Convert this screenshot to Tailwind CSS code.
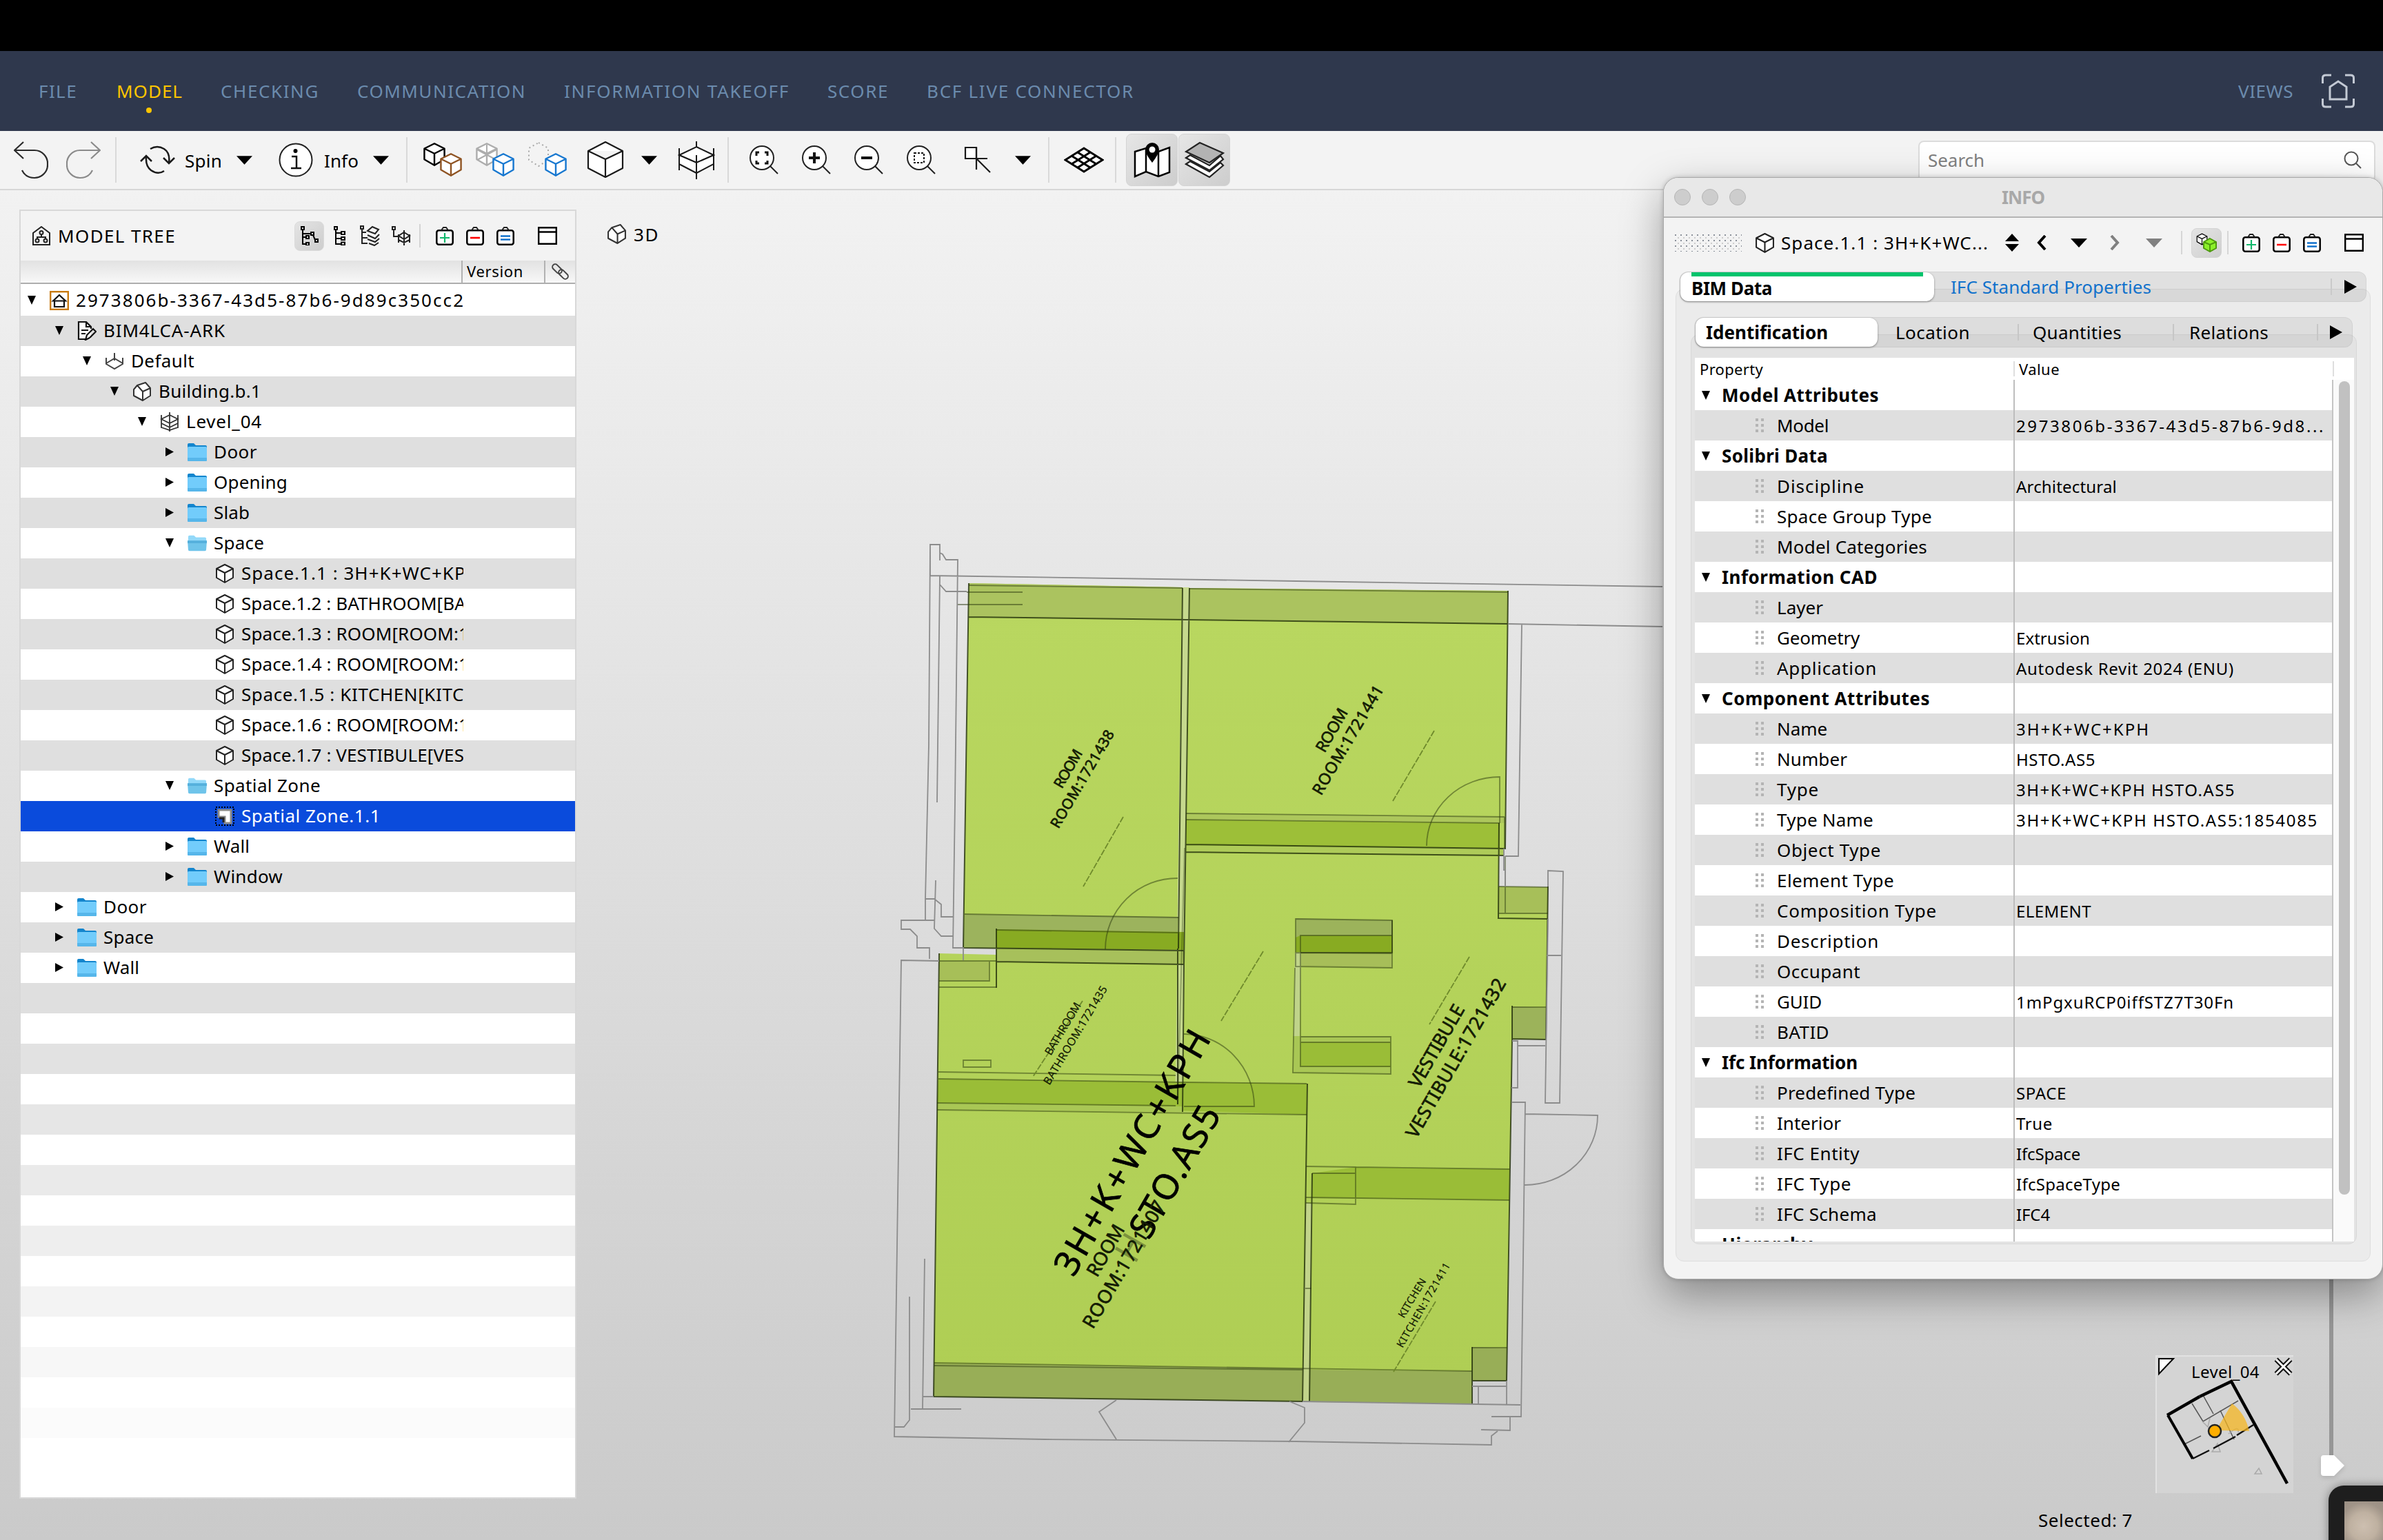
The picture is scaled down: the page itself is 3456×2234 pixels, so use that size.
<!DOCTYPE html>
<html lang="en">
<head>
<meta charset="utf-8">
<title>Model</title>
<script src="https://cdn.jsdelivr.net/npm/@tailwindcss/browser@4"></script>
</head>
<body class="relative flex h-[2234px] w-[3456px] flex-col overflow-hidden bg-black pt-[74px] font-['Noto_Sans','Open_Sans',sans-serif] text-[26px] leading-none text-black">

<!-- shared icons -->
<svg class="hidden">
  <defs>
    <symbol id="cube" viewBox="0 0 28 28"><path d="M14 1 26 7V20L14 27 2 20V7Z" fill="#fff"/><path d="M14 1 26 7V20L14 27 2 20V7ZM2 7 14 13 26 7M14 13V27" fill="none" stroke="currentColor" stroke-width="2" stroke-linejoin="round"/></symbol>
    <symbol id="building" viewBox="0 0 28 28"><path d="M2 11 7 5 19 1 26 9V20L15 27 2 20Z" fill="#fff"/><path d="M2 11 7 5 19 1 26 9V20L15 27 2 20ZM7 5 15 14 26 9M15 14V27" fill="none" stroke="#333" stroke-width="2" stroke-linejoin="round"/></symbol>
    <symbol id="level" viewBox="0 0 28 28"><path d="M2 4V23M26 4V23M14 0V28M14 4 26 10 14 16 2 10ZM2 16 14 22 26 16M2 22 14 26 26 22" fill="none" stroke="#333" stroke-width="1.8"/></symbol>
    <symbol id="site" viewBox="0 0 28 28"><path d="M2 9V18L14 25 26 18V9M2 17 14 10 26 17M14 2V13" fill="none" stroke="#444" stroke-width="2"/></symbol>
    <symbol id="doc" viewBox="0 0 28 28"><path d="M2 1H13L20 8V26H2Z" fill="#fff"/><path d="M20 11V8L13 1H2V26H13M13 1V8H20M6 13H16M6 18H12M12 27 14 20 23 11 27 15 18 24Z" fill="none" stroke="#111" stroke-width="2.2"/></symbol>
    <symbol id="project" viewBox="0 0 28 28"><rect x="1.2" y="1.2" width="25.6" height="25.6" fill="#fff" stroke="#c87a10" stroke-width="2.4"/><path d="M5 14.500 14 6 23 14.500H5ZM7 15V23H21V15" fill="none" stroke="#111" stroke-width="2.2"/></symbol>
    <symbol id="folder" viewBox="0 0 28 28"><path d="M0 3Q0 1 2 1H9L12 4H26Q28 4 28 6V14H0Z" fill="#1385cd"/><rect y="6" width="28" height="21" rx="1.500" fill="#72ccfb"/><path d="M0 22H28V25.500Q28 27 26.500 27H1.500Q0 27 0 25.500Z" fill="#56b6ea"/></symbol>
    <symbol id="folder-open" viewBox="0 0 30 28"><path d="M1 4Q1 2 3 2H10L13 5H27Q29 5 29 7V12H1Z" fill="#93d9f9"/><path d="M0 10H30L29 24Q29 26 27 26H3Q1 26 1 24Z" fill="#6fc4ea"/><path d="M0 10H30V14H0Z" fill="#55b0dc"/></symbol>
    <symbol id="zone" viewBox="0 0 28 28"><rect x="1" y="1" width="26" height="26" fill="none" stroke="#000" stroke-width="2" stroke-dasharray="2 2"/><path d="M5 5H23V24H14V15H5Z" fill="#fff" stroke="#8a8a8a" stroke-width="3"/><path d="M6 17H12V23" fill="none" stroke="#222" stroke-width="3"/></symbol>
    <symbol id="tri" viewBox="0 0 24 13"><path d="M0 0H24L12 13Z" fill="currentColor"/></symbol>
    <symbol id="basket" viewBox="0 0 26 28"><rect x="1.300" y="6.300" width="23.400" height="20.400" rx="3" fill="#fff" stroke="#000" stroke-width="2.500"/><path d="M8 6 11 2H15L18 6" fill="none" stroke="#222" stroke-width="2"/></symbol>
    <symbol id="pane" viewBox="0 0 28 26"><path d="M1.200 1.200H26.800V24.800H1.200ZM1.200 7.500H26.800" fill="#fff" stroke="#000" stroke-width="2.400"/></symbol>
    <symbol id="grip" viewBox="0 0 12 20"><path d="M0 2H4M8 2H12M0 10H4M8 10H12M0 18H4M8 18H12" stroke="#b4b4b4" stroke-width="4"/></symbol>
    <symbol id="lens" viewBox="0 0 44 44"><circle cx="19" cy="19" r="17" fill="#fff" stroke="#222" stroke-width="2"/><path d="M31 31 42 42" stroke="#222" stroke-width="2"/></symbol>
  </defs>
</svg>

<!-- main menu -->
<nav class="flex h-[116px] shrink-0 items-center bg-[#2f384d] text-[#6b8bad]">
  <span class="ml-[56px] w-[113px] whitespace-nowrap" data-w="56">FILE</span>
  <span class="relative w-[151px] whitespace-nowrap text-[#fdc500]" data-w="96">MODEL<i class="absolute top-[37px] left-[43px] size-2 rounded-full bg-[#fdc500]"></i></span>
  <span class="w-[198px] whitespace-nowrap" data-w="143">CHECKING</span>
  <span class="w-[300px] whitespace-nowrap" data-w="245">COMMUNICATION</span>
  <span class="w-[382px] whitespace-nowrap" data-w="327">INFORMATION TAKEOFF</span>
  <span class="w-[144px] whitespace-nowrap" data-w="89">SCORE</span>
  <span class="w-[302px] whitespace-nowrap" data-w="301">BCF LIVE CONNECTOR</span>
  <span class="ml-auto whitespace-nowrap" data-w="80">VIEWS</span>
  <svg class="mr-[41px] ml-[41px] h-[50px] w-[48px]" viewBox="0 0 48 50" fill="none" stroke="#c3c9d4" stroke-width="3"><path d="M1.500 14V6Q1.500 2 6 2H14M34 2H42Q46.500 2 46.500 6V14M46.500 36V44Q46.500 48 42 48H34M14 48H6Q1.500 48 1.500 44V36"/><path d="M12 37V19L24 11 36 19V37Z"/></svg>
</nav>

<!-- toolbar -->
<div class="flex h-[86px] shrink-0 items-center border-b-2 border-[#d7d7d7] bg-[#f3f3f3]">
  <svg class="ml-[20px] h-[56px] w-[50px]" viewBox="0 0 50 56" fill="none" stroke="#2a2a2a" stroke-width="2.200"><path d="M14 2 1 14 14 26M1 14H30A19 19 0 0 1 49 34A19 19 0 0 1 30 54Q17 54 12 43"/></svg>
  <svg class="ml-[26px] h-[56px] w-[50px]" viewBox="0 0 50 56" fill="none" stroke="#8a8a8a" stroke-width="2.200"><path d="M36 2 49 14 36 26M49 14H20A19 19 0 0 0 1 34A19 19 0 0 0 20 54Q33 54 38 43"/></svg>
  <i class="ml-[21px] h-[66px] w-[2px] bg-[#d9d9d9]"></i>
  <svg class="ml-[34px] h-[42px] w-[51px]" viewBox="0 0 51 42" fill="none" stroke="#1a1a1a" stroke-width="2.500"><path d="M15 5Q25 -1 35 5 44 11 42 25M34 18 42 26 50 18M35 37Q26 43 16 36 8 30 9 17M1 23 9 15 17 23"/></svg>
  <span class="ml-[14px] w-[54px] whitespace-nowrap pt-px" data-w="54">Spin</span>
  <svg class="ml-[21px] h-[13px] w-[23px]"><use href="#tri"/></svg>
  <svg class="ml-[38px] h-[50px] w-[50px]" viewBox="0 0 50 50"><circle cx="25" cy="25" r="23.500" fill="#fff" stroke="#222" stroke-width="2"/><circle cx="24.500" cy="12" r="3"/><path d="M19 20H26V37M18 37H33" fill="none" stroke="#111" stroke-width="2.500"/></svg>
  <span class="ml-[16px] w-[50px] whitespace-nowrap pt-px" data-w="50">Info</span>
  <svg class="ml-[21px] h-[13px] w-[23px]"><use href="#tri"/></svg>
  <i class="ml-[25px] h-[66px] w-[2px] bg-[#d9d9d9]"></i>
  <svg class="ml-[22px] h-[54px] w-[58px]" viewBox="0 0 58 54"><use href="#cube" width="34" height="38" x="0" y="0"/><use href="#cube" width="34" height="38" x="24" y="15" class="text-[#8f5423]"/></svg>
  <svg class="ml-[18px] h-[54px] w-[58px]" viewBox="0 0 58 54"><g class="text-[#adadad]"><use href="#cube" width="34" height="38" x="0" y="0"/><path d="M17 5V33M3 12 31 27M31 12 3 27" stroke="currentColor" stroke-width="2"/></g><use href="#cube" width="34" height="38" x="24" y="15" class="text-[#1878d0]"/></svg>
  <svg class="ml-[18px] h-[54px] w-[58px]" viewBox="0 0 58 54"><path d="M16 2 30 10V27L16 36 2 27V10Z" fill="none" stroke="#a8a8a8" stroke-width="2" stroke-dasharray="2 4"/><use href="#cube" width="34" height="38" x="24" y="15" class="text-[#1878d0]"/></svg>
  <svg class="ml-[28px] h-[54px] w-[56px]" viewBox="0 0 56 54" fill="#fff" stroke="#1a1a1a" stroke-width="2.200" stroke-linejoin="round"><path d="M27 1 52 14V39L27 52 2 39V14ZM2 14 27 26 52 14M27 26V52"/></svg>
  <svg class="ml-[23px] h-[13px] w-[23px]"><use href="#tri"/></svg>
  <svg class="ml-[30px] h-[56px] w-[54px]" viewBox="0 0 54 56" fill="none" stroke="#1a1a1a" stroke-width="2"><path d="M27 9 52 21 27 32 2 21Z" fill="#fff"/><path d="M2 34 27 47 52 34V21L27 32 2 21Z" fill="#fff"/><path d="M27 1V10M2 11V43M52 11V43M27 21V56"/></svg>
  <i class="ml-[18px] h-[66px] w-[2px] bg-[#d9d9d9]"></i>
  <svg class="ml-[29px] h-[44px] w-[44px]" viewBox="0 0 44 44"><use href="#lens"/><path d="M11 16V11H15M23 11H27V16M27 23V27H23M15 27H11V23" fill="none" stroke="#111" stroke-width="3"/></svg>
  <svg class="ml-[32px] h-[44px] w-[44px]" viewBox="0 0 44 44"><use href="#lens"/><path d="M11 19H27M19 11V27" stroke="#111" stroke-width="4"/></svg>
  <svg class="ml-[32px] h-[44px] w-[44px]" viewBox="0 0 44 44"><use href="#lens"/><path d="M11 19H27" stroke="#111" stroke-width="4"/></svg>
  <svg class="ml-[32px] h-[44px] w-[44px]" viewBox="0 0 44 44"><use href="#lens"/><rect x="12" y="12" width="14" height="14" fill="none" stroke="#111" stroke-width="2" stroke-dasharray="3 2"/></svg>
  <svg class="ml-[40px] h-[40px] w-[40px]" viewBox="0 0 40 40" fill="none" stroke="#1a1a1a" stroke-width="2.200"><path d="M2 2H18V18H2Z" fill="#fff"/><path d="M18 2V34M2 18H34M18 18 38 38"/></svg>
  <svg class="ml-[34px] h-[13px] w-[23px]"><use href="#tri"/></svg>
  <i class="ml-[25px] h-[66px] w-[2px] bg-[#d9d9d9]"></i>
  <svg class="ml-[21px] h-[38px] w-[58px]" viewBox="0 0 58 38" fill="#fff" stroke="#000" stroke-width="3"><path d="M29 2 56 19 29 36 2 19Z"/><path d="M20 8 47 25M11 13 38 30M38 8 11 25M47 13 20 30"/></svg>
  <i class="ml-[16px] h-[66px] w-[2px] bg-[#d9d9d9]"></i>
  <span class="ml-[14px] flex h-[76px] w-[75px] items-center justify-center rounded-lg border border-[#d4d4d4] bg-linear-to-br from-[#e6e6e6] to-[#cdcdcd]">
    <svg class="h-[52px] w-[54px]" viewBox="0 0 54 52"><path d="M2 14 18 9 36 14 52 8V44L36 50 18 43 2 50Z" fill="#fff" stroke="#000" stroke-width="2.500"/><path d="M18 9V43M36 14V50" stroke="#000" stroke-width="2.500"/><path d="M27 1A10 10 0 0 1 37 11Q37 17 27 30 17 17 17 11A10 10 0 0 1 27 1Z"/><circle cx="27" cy="11" r="4.500" fill="#fff"/></svg>
  </span>
  <span class="ml-px flex h-[76px] w-[75px] items-center justify-center rounded-lg border border-[#d4d4d4] bg-linear-to-br from-[#e6e6e6] to-[#cdcdcd]">
    <svg class="h-[54px] w-[58px]" viewBox="0 0 58 54" stroke="#222" stroke-width="2.200" fill="#fff"><path d="M2 33 8 29 36 44 52 31 56 35 36 52Z"/><path d="M2 24 8 20 36 35 52 21 56 26 36 42Z"/><path d="M22 2 56 17 36 31 2 15Z" fill="#b3b3b3"/></svg>
  </span>
  <div class="mt-[3px] mr-[11px] ml-auto flex h-[60px] w-[663px] items-center rounded-lg border-2 border-[#dcdcdc] bg-white pr-[18px] pb-[4px] pl-[12px] text-[#808080]">
    <span class="whitespace-nowrap" data-w="82">Search</span>
    <svg class="ml-auto size-[26px]" viewBox="0 0 26 26" fill="none" stroke="#555" stroke-width="2"><circle cx="11" cy="11" r="9.500"/><path d="M18 18 25 25"/></svg>
  </div>
</div>

<!-- workspace -->
<main class="relative flex grow items-start bg-linear-to-b from-[#f2f2f2] to-[#cacaca] pt-[28px]">

  <!-- model tree -->
  <section class="ml-[28px] flex h-[1870px] w-[808px] flex-col border-2 border-[#d8d8d8] bg-white">
    <div class="flex h-[72px] shrink-0 items-center bg-[#f3f3f3] pl-[16px]">
      <svg class="h-[28px] w-[28px]" viewBox="0 0 28 28" fill="none" stroke="#222" stroke-width="2"><path d="M2 27V10L14 1 26 10V27Z"/><circle cx="14" cy="9.500" r="2.500"/><circle cx="8" cy="21" r="2.500"/><circle cx="20" cy="21" r="2.500"/><path d="M14 12V16M8 18V16H20V18"/></svg>
      <span class="ml-[10px] w-[172px] whitespace-nowrap" data-w="171">MODEL TREE</span>
      <span class="ml-[171px] flex h-[43px] w-[43px] items-center justify-center rounded-lg border border-[#dadada] bg-linear-to-br from-[#e4e4e4] to-[#cdcdcd]">
        <svg class="size-[28px]" viewBox="0 0 28 28" fill="none" stroke="#000" stroke-width="2"><path d="M2 1H6V5H2ZM4 5V26H9M4 11H16M9 16H4M16 9H20V13H16ZM9 14H13V18H9ZM9 24H13V28H9ZM19 13 22 20M22 19H26V23H22Z"/></svg>
      </span>
      <svg class="ml-[13px] h-[28px] w-[20px]" viewBox="0 0 20 28" fill="none" stroke="#000" stroke-width="2"><path d="M2 1H6V5H2ZM4 5V26H12M4 10H12M4 18H12M12 8H17V12H12ZM12 16H17V20H12ZM12 23.500H17V27.500H12Z"/></svg>
      <svg class="ml-[18px] h-[30px] w-[32px]" viewBox="0 0 32 30" fill="none" stroke="#222" stroke-width="2"><path d="M2 1H6V5H2ZM4 5V26H12M4 10H10M4 18H12"/><path d="M19 2 28 6 23 12 12 8ZM12 14 23 19 29 13M12 20 23 24 29 19M14 26 22 29 28 25"/></svg>
      <svg class="ml-[15px] h-[28px] w-[28px]" viewBox="0 0 28 28" fill="none" stroke="#222" stroke-width="2"><path d="M1 1H5V5H1ZM3 5V15H10M18 6V28M10 12V24M26 12V24M18 9 26 14 18 19 10 14ZM10 20 18 24 26 20"/></svg>
      <i class="ml-[12px] h-[34px] w-[2px] bg-[#d4d4d4]"></i>
      <svg class="ml-[22px] h-[28px] w-[26px]" viewBox="0 0 26 28"><use href="#basket"/><path d="M6 17H20M13 10V24" stroke="#12b86c" stroke-width="2.200"/></svg>
      <svg class="ml-[18px] h-[28px] w-[26px]" viewBox="0 0 26 28"><use href="#basket"/><path d="M6 17H20" stroke="#f00" stroke-width="2.600"/></svg>
      <svg class="ml-[18px] h-[28px] w-[26px]" viewBox="0 0 26 28"><use href="#basket"/><path d="M6 14.500H20M6 19.500H20" stroke="#1272cc" stroke-width="2.400"/></svg>
      <svg class="ml-[34px] h-[26px] w-[28px]"><use href="#pane"/></svg>
    </div>
    <div class="flex h-[34px] shrink-0 border-b-2 border-[#aeaeae] bg-linear-to-b from-[#e2e2e2] to-[#f8f8f8] text-[22px] leading-[30px]">
      <span class="w-[641px] border-r-2 border-[#b2b2b2]"></span>
      <span class="w-[120px] border-r-2 border-[#b2b2b2] pl-[6px] whitespace-nowrap"><b class="font-normal" data-size="22" data-w="82">Version</b></span>
      <svg class="mt-[3px] ml-[9px] h-[26px] w-[28px]" viewBox="0 0 28 26" fill="none" stroke="#444" stroke-width="2"><rect x="0" y="5" width="16" height="8" rx="4" transform="rotate(45 8 9)"/><rect x="9" y="13" width="16" height="8" rx="4" transform="rotate(45 17 17)"/></svg>
    </div>
    <div id="tree" class="flex min-h-0 grow flex-col overflow-hidden pt-[2px]"></div>
  </section>

  <!-- 3D view title -->
  <div class="ml-[44px] flex items-center pt-[21px]">
    <svg class="size-[29px]"><use href="#building"/></svg>
    <span class="ml-[10px] whitespace-nowrap" data-w="37">3D</span>
  </div>

  <!-- floor plan -->
  <svg class="absolute inset-0 h-[1958px] w-[3456px]" viewBox="0 276 3456 1958" fill="none">
    <defs>
      <linearGradient id="floor" gradientUnits="userSpaceOnUse" x1="0" y1="850" x2="0" y2="2035"><stop offset="0" stop-color="#b9d760"/><stop offset="1" stop-color="#afce54"/></linearGradient>
    </defs>
    <g fill="url(#floor)">
      <path d="M1405 846 1715 852 1707 1378 1397 1375Z"/>
      <path d="M1725 853 2187 857 2183 1231 2174 1231 2173 1286 2245 1287 2242 1508 2193 1508 2185 2003 2135 2003V2036L1354 2026 1362 1383 1445 1385V1375L1717 1379Z"/>
    </g>
    <g>
      <path d="M1405 846 1715 852V898L1405 895ZM1725 853 2187 857V905L1725 898Z" fill="#abc35f"/>
      <path d="M1715 852H1725L1715 1613H1704Z" fill="#c6d98e"/>
      <path d="M1399 1326 1709 1330 1707 1378 1397 1375Z" fill="#9cb35d"/>
      <path d="M1445 1348 1717 1352 1717 1378 1445 1375Z" fill="#88ab22"/>
      <path d="M1445 1375 1717 1379V1399L1445 1395Z" fill="#a7c05b"/>
      <path d="M1362 1394 1435 1395V1423H1362Z" fill="#a7bf58"/>
      <path d="M1720 1179 2182 1185V1194L1720 1189Z" fill="#adc75c"/>
      <path d="M1720 1189 2175 1194V1231L1720 1226Z" fill="#9dbf38"/>
      <path d="M1719 1226 2181 1231V1241L1719 1236Z" fill="#aecb59"/>
      <path d="M2174 1286 2245 1287V1325H2174Z" fill="#a7bf59"/>
      <path d="M2193 1460 2243 1462 2242 1508H2193Z" fill="#9cb35a"/>
      <path d="M1879 1332 2019 1335V1357H1886L1879 1382Z" fill="#9cb35b"/>
      <path d="M1886 1357H2019V1382L1879 1381V1360Z" fill="#88ab22"/>
      <path d="M1879 1381 2019 1383V1404L1879 1402Z" fill="#a7be59"/>
      <path d="M1878 1382H1887L1884 1548H1875Z" fill="#c0d48a"/>
      <path d="M1875 1503H2017V1558L1875 1556Z" fill="#a9c755"/>
      <path d="M1886 1512H2017V1548L1885 1547Z" fill="#9abd37"/>
      <path d="M1361 1565 1895 1572V1617L1359 1600Z" fill="#9abd37"/>
      <path d="M1359 1600 1715 1605V1613L1359 1610Z" fill="#a9c755"/>
      <path d="M1903 1702 1966 1693 2189 1696V1741L1903 1738Z" fill="#9abd37"/>
      <path d="M1894 1745 1903 1746 1899 2033H1889Z" fill="#c2d48a"/>
      <path d="M1355 1978 1889 1985V2033L1354 2026ZM1899 1987 2135 1989V2036L1899 2034ZM2135 1954 2186 1956 2185 2003H2135Z" fill="#98ae57"/>
    </g>
    <!-- room outlines -->
    <g stroke="#1e2a08" stroke-opacity=".78" stroke-width="2">
      <path d="M1405 846 1397 1375M1405 895 2187 905M1715 853 1709 1376M1725 853 1717 1399M2187 857 2183 1231 1719 1225M1719 1236 2181 1241M2174 1194 2173 1332 2245 1333M2245 1286 2242 1508 2193 1507V1459M2193 1507 2185 2003H2135M2135 1954V2036M1397 1375 1717 1379V1399L1445 1395M1445 1347V1433M1362 1383 1354 2026 1889 2033M1896 1572 1889 2033M1903 1702 1899 2033M1708 1376V1602M1717 1399 1715 1613"/>
      <path d="M1886 1382H2019V1335" stroke-opacity=".6"/>
      <path d="M1718 1230 1708 1602" stroke-opacity=".3"/>
    </g>
    <g stroke="#2a380e" stroke-opacity=".5" stroke-width="1.800">
      <path d="M1405 849 1715 853M1725 854 2187 859M1720 1180 2182 1185M1720 1189 2175 1194M2182 1185V1230M1399 1326 1709 1331M1445 1349 1708 1353M1362 1394H1445M1362 1423H1435V1395M1362 1432H1445"/>
      <path d="M2174 1286 2245 1287M2174 1325H2245M2183 1242V1324M2193 1461H2243"/>
      <path d="M1879 1333 2019 1335V1404L1879 1402ZM1886 1547V1357H2019M1879 1382 2019 1383M1878 1404 1875 1556 2017 1558V1504H1886M1886 1512H2017M1885 1547H2017" />
      <path d="M1361 1555 1705 1560M1361 1565 1717 1570 1895 1572M1359 1600 1705 1604M1359 1610 1895 1617M1397 1538H1437V1548H1397Z"/>
      <path d="M1894 1692 1966 1693V1747L1894 1745M1903 1702H1966M1966 1693 2189 1696M1894 1737 2189 1741M1893 1869H1902"/>
      <path d="M1355 1977 2135 1989M1355 1981 1889 1987M2135 1955H2186"/>
      <path d="M1603 1377A104 103 0 0 1 1708 1274M2069 1227A106 100 0 0 1 2175 1127V1194M1717 1500A102 105 0 0 1 1819 1605H1717"/>
      <path d="M1483 859H1402M1483 877H1389"/>
    </g>
    <!-- leader lines -->
    <path d="M1629 1185 1571 1286M2080 1060 2020 1162M1832 1380 1771 1481M2131 1388 2073 1486M2082 1888 2021 1990M1570 1452 1498 1562" stroke="#6f8a2c" stroke-width="1.800" stroke-dasharray="9 2"/>
    <!-- walls -->
    <g stroke="#8c8c8c" stroke-width="1.800">
      <path d="M1349 835V790H1363V813M1363 802 1367 804 1372 812H1389L1385 1164 1382 1375H1397V1393M1349 790 1347 1080 1342 1304V1335M1349 835 1880 843 2411 851M1363 836 1359 1164M1363 848 1372 858H1402M1342 1304H1355L1365 1312V1330H1382M1357 1277 1355 1347 1365 1358H1382M1355 1335H1307V1348H1320L1330 1358V1375H1348V1391"/>
      <path d="M1362 1394 1307 1393 1297 2084 1515 2088 1879 2091 2163 2096V2083L2172 2076M1297 2070H1311L1319 2060V1881M1341 1826 1338 2043M1321 2044H1394M1338 2026H1354"/>
      <path d="M2187 905 2411 909M2207 905 2202 1242H2183M2181 1231V1262H2183V1286M2245 1286V1263L2267 1264 2262 1600H2241L2245 1333M2243 1386H2264M2201 1517H2241M2193 1510H2201V1578H2192M2192 1599H2212L2206 2055H2163M2212 1616 2317 1618A105 101 0 0 1 2211 1719M2185 2003V2038M2135 2011H2185M2144 2011V2036M1889 2033 2205 2038M2190 2055V2075L2148 2074"/>
      <path d="M1619 2031 1594 2048 1619 2088M1870 2033 1892 2042V2064L1869 2092"/>
    </g>
    <!-- room labels -->
    <g fill="#141c04" stroke="#141c04" stroke-width=".7" font-family="'Noto Sans', sans-serif">
      <g font-size="21"><text transform="translate(1540 1145) rotate(-60)" textLength="61">ROOM</text><text transform="translate(1535 1203) rotate(-59.500)" textLength="161">ROOM:1721438</text></g>
      <g font-size="23"><text transform="translate(1921 1093) rotate(-60)" textLength="69">ROOM</text><text transform="translate(1916 1155) rotate(-59.500)" textLength="180">ROOM:1721441</text></g>
      <g font-size="16" stroke-width=".2"><text transform="translate(1524 1532) rotate(-59)" textLength="86">BATHROOM</text><text transform="translate(1522 1575) rotate(-59)" textLength="164">BATHROOM:1721435</text></g>
      <g font-size="27"><text transform="translate(2058 1580) rotate(-60)" textLength="134">VESTIBULE</text><text transform="translate(2054 1653) rotate(-60)" textLength="262">VESTIBULE:1721432</text></g>
      <g font-size="15" stroke-width=".2"><text transform="translate(2036 1913) rotate(-59)" textLength="64">KITCHEN</text><text transform="translate(2034 1956) rotate(-60)" textLength="139">KITCHEN:1721411</text></g>
      <g font-size="51" fill="#000" stroke="#000"><text transform="translate(1557 1854) rotate(-60)" textLength="401">3H+K+WC+KPH</text><text transform="translate(1646 1835) rotate(-60)" textLength="252"><tspan fill-opacity=".3" stroke-opacity="0">H</tspan>STO.AS5</text></g>
      <g font-size="27"><text transform="translate(1591 1854) rotate(-60)" textLength="82">ROOM</text><text transform="translate(1585 1929) rotate(-59.500)" textLength="209">ROOM:1721407</text></g>
    </g>
  </svg>

  <!-- section slider -->
  <div class="absolute top-[1500px] left-[3378px] h-[336px] w-[6px] bg-[#969696]"></div>
  <svg class="absolute top-[1834px] left-[3365px] h-[34px] w-[37px] drop-shadow-md" viewBox="0 0 37 34"><path d="M1 5Q1 1 5 1H20L35 16 20 31H5Q1 31 1 27Z" fill="#fff"/></svg>

  <!-- mini map -->
  <div class="absolute top-[1690px] left-[3126px] h-[200px] w-[200px] border-t-2 border-l-2 border-[#e2e2e2] bg-[#d4d4d4]">
    <svg class="absolute -top-[2px] -left-[2px] size-[200px]" viewBox="3126 1966 200 200" fill="none">
      <path d="M3131 1971H3152L3131 1993Z" fill="#fff" stroke="#000" stroke-width="2"/>
      <path d="M3301 1972 3322 1993M3322 1972 3301 1993" stroke="#111" stroke-width="7"/><path d="M3301 1972 3322 1993M3322 1972 3301 1993" stroke="#fff" stroke-width="3"/>
      <path d="M3179 2036 3195 2062 3246 2032M3195 2024 3210 2051M3220 2046 3240 2088M3168 2095 3192 2083" stroke="#555" stroke-width="1.500"/>
      <path d="M3194 2062 3202 2070 3205 2057M3232 2080Q3248 2066 3246 2078M3208 2106H3220L3216 2094ZM3270 2138 3276 2130 3280 2138Z" stroke="#aaa" stroke-width="1.500"/>
      <path d="M3180 2116 3204 2104M3210 2101 3242 2084M3244 2082 3268 2067" stroke="#111" stroke-width="2.500"/>
      <path d="M3144 2053 3180 2116" stroke="#000" stroke-width="4"/>
      <path d="M3143 2053 3190 2026" stroke="#000" stroke-width="4.500"/><path d="M3190 2026 3236 2004 3317 2152" stroke="#000" stroke-width="4.500"/>
      <path d="M3218 2068 3237 2036Q3256 2050 3262 2076L3218 2075Z" fill="#f7b51c" fill-opacity=".72"/>
      <circle cx="3212" cy="2076" r="9" fill="#ffae00" stroke="#222" stroke-width="2.500"/>
    </svg>
    <span class="absolute top-[10px] left-[50px] whitespace-nowrap text-[24px]" data-size="24" data-w="99">Level_04</span>
  </div>

  <span class="absolute top-[1916px] left-[2956px] whitespace-nowrap" data-w="137">Selected: 7</span>

  <!-- floating video call thumbnail -->
  <div class="absolute top-[1879px] left-[3377px] h-[100px] w-[120px] rounded-tl-[22px] bg-[#1e1e1e] pt-[23px] pl-[23px] shadow-[0_0_14px_rgba(0,0,0,0.4)]">
    <div class="h-full w-full bg-[radial-gradient(circle_at_28px_36px,#cdbfb0_0,#bfb1a1_20px,#a09488_34px,#8f857b_70px)]"></div>
  </div>
</main>

<!-- info window -->
<section class="absolute top-[257px] left-[2412px] flex h-[1599px] w-[1044px] flex-col overflow-hidden rounded-[22px] border border-[#a9a9a9] bg-[#f3f3f3] shadow-[0_22px_60px_rgba(0,0,0,0.35),0_0_6px_rgba(0,0,0,0.2)]">
  <header class="relative flex h-[58px] shrink-0 items-center justify-center border-b-2 border-[#b4b4b4] bg-[#e8e8e8]">
    <div class="absolute left-[15px] flex gap-[16px]">
      <i class="size-[24px] rounded-full border border-[#b5b5b5] bg-[#cdcdcd]"></i><i class="size-[24px] rounded-full border border-[#b5b5b5] bg-[#cdcdcd]"></i><i class="size-[24px] rounded-full border border-[#b5b5b5] bg-[#cdcdcd]"></i>
    </div>
    <b class="whitespace-nowrap text-[#a8a8a8]" data-w="62">INFO</b>
  </header>

  <div class="flex h-[72px] shrink-0 items-center pl-[15px]">
    <svg class="h-[26px] w-[98px]" viewBox="0 0 98 26"><defs><pattern id="dots" width="8" height="8" patternUnits="userSpaceOnUse"><rect x="1" y="1" width="2" height="2" fill="#8a9099"/><rect x="5" y="5" width="2" height="2" fill="#ccc"/></pattern></defs><rect width="98" height="26" fill="url(#dots)"/></svg>
    <svg class="ml-[19px] size-[29px] text-[#222]"><use href="#cube"/></svg>
    <span class="ml-[9px] w-[302px] whitespace-nowrap" data-w="301">Space.1.1 : 3H+K+WC...</span>
    <svg class="ml-[23px] h-[26px] w-[20px]" viewBox="0 0 20 26"><path d="M0 11H20L10 0ZM0 15H20L10 26Z"/></svg>
    <svg class="ml-[26px] h-[22px] w-[14px]" viewBox="0 0 14 22" fill="none" stroke="#000" stroke-width="4"><path d="M12 1 3 11 12 21"/></svg>
    <svg class="ml-[35px] h-[13px] w-[24px]"><use href="#tri"/></svg>
    <svg class="ml-[33px] h-[22px] w-[14px]" viewBox="0 0 14 22" fill="none" stroke="#808080" stroke-width="4"><path d="M2 1 11 11 2 21"/></svg>
    <svg class="ml-[38px] h-[13px] w-[24px] text-[#808080]"><use href="#tri"/></svg>
    <i class="ml-[27px] h-[34px] w-[2px] bg-[#d6d6d6]"></i>
    <span class="ml-[13px] flex h-[43px] w-[44px] items-center justify-center rounded-lg border border-[#d4d4d4] bg-linear-to-br from-[#e4e4e4] to-[#cfcfcf]">
      <svg class="h-[28px] w-[30px]" viewBox="0 0 30 28"><use href="#cube" width="17" height="18"/><path d="M20 8 29 13V22L20 27 11 22V13Z" fill="#8cf02a" stroke="#4e9a10" stroke-width="2"/><path d="M11 13 20 17 29 13M20 17V27" fill="none" stroke="#4e9a10" stroke-width="2"/></svg>
    </span>
    <i class="ml-[8px] h-[34px] w-[2px] bg-[#d6d6d6]"></i>
    <svg class="ml-[20px] h-[28px] w-[26px]" viewBox="0 0 26 28"><use href="#basket"/><path d="M6 17H20M13 10V24" stroke="#12b86c" stroke-width="2.200"/></svg>
    <svg class="ml-[18px] h-[28px] w-[26px]" viewBox="0 0 26 28"><use href="#basket"/><path d="M6 17H20" stroke="#f00" stroke-width="2.600"/></svg>
    <svg class="ml-[18px] h-[28px] w-[26px]" viewBox="0 0 26 28"><use href="#basket"/><path d="M6 14.500H20M6 19.500H20" stroke="#1272cc" stroke-width="2.400"/></svg>
    <svg class="ml-[34px] h-[26px] w-[28px]"><use href="#pane"/></svg>
  </div>

  <!-- outer tabs -->
  <div class="relative z-10 mt-[6px] ml-[23px] flex h-[44px] w-[996px] shrink-0 items-center rounded-xl border border-black/5 bg-black/8">
    <div class="flex h-[42px] w-[368px] flex-col rounded-xl bg-white px-[16px] shadow-[0_1px_3px_rgba(0,0,0,0.4)]">
      <i class="h-[6px] w-full bg-[#00c46c]"></i>
      <b class="pt-[4px] whitespace-nowrap" data-w="117">BIM Data</b>
    </div>
    <span class="ml-[24px] w-[292px] whitespace-nowrap text-[#1272cc]" data-w="291">IFC Standard Properties</span>
    <i class="ml-auto h-[24px] w-[2px] bg-[#cacaca]"></i>
    <svg class="mr-[13px] ml-[18px] h-[20px] w-[18px]" viewBox="0 0 18 20"><path d="M0 0V20L18 10Z"/></svg>
  </div>

  <div class="-mt-[19px] ml-[17px] flex h-[1411px] w-[1008px] shrink-0 flex-col rounded-xl border border-[#dedede] bg-[#ebebeb]">
    <!-- inner tabs -->
    <div class="relative z-10 mt-[40px] ml-[27px] flex h-[44px] w-[954px] shrink-0 items-center rounded-xl border border-black/5 bg-black/6">
      <div class="flex h-[42px] w-[264px] items-center rounded-xl bg-white pl-[15px] shadow-[0_1px_3px_rgba(0,0,0,0.4)]"><b class="whitespace-nowrap" data-w="177">Identification</b></div>
      <span class="ml-[26px] w-[177px] whitespace-nowrap" data-w="108">Location</span>
      <i class="h-[24px] w-[2px] bg-[#c6c6c6]"></i>
      <span class="ml-[20px] w-[203px] whitespace-nowrap" data-w="129">Quantities</span>
      <i class="h-[24px] w-[2px] bg-[#c6c6c6]"></i>
      <span class="ml-[22px] w-[185px] whitespace-nowrap" data-w="115">Relations</span>
      <i class="h-[24px] w-[2px] bg-[#c6c6c6]"></i>
      <svg class="ml-[17px] h-[20px] w-[18px]" viewBox="0 0 18 20"><path d="M0 0V20L18 10Z"/></svg>
    </div>

    <div class="-mt-[19px] ml-[21px] flex h-[1320px] w-[966px] shrink-0 flex-col rounded-xl border border-[#d8d8d8] bg-[#e3e3e3] pt-[33px] pl-[5px]">
      <div class="flex h-[32px] w-[956px] shrink-0 items-center bg-white pl-[7px] text-[22px]">
        <span class="w-[455px] whitespace-nowrap"><b class="font-normal" data-size="22" data-w="92">Property</b></span>
        <i class="h-[22px] w-[2px] bg-[#dedede]"></i>
        <span class="w-[461px] pl-[6px] whitespace-nowrap"><b class="font-normal" data-size="22" data-w="59">Value</b></span>
        <i class="h-[22px] w-[2px] bg-[#dedede]"></i>
      </div>
      <div class="flex h-[1250px] w-[956px] shrink-0 bg-white">
        <div id="props" class="flex h-full w-[926px] flex-col overflow-hidden border-r-2 border-[#c4c4c4]"></div>
        <div class="h-full w-[30px] bg-[#fafafa] pt-[2px] pl-[8px]"><div class="h-[1180px] w-[16px] rounded-full bg-[#c1c1c1]"></div></div>
      </div>
    </div>
  </div>
</section>

<script>
// Tree rows: [level, state, icon, label, label width]
const tree = [
  [0, 'open', 'project', '2973806b-3367-43d5-87b6-9d89c350cc24', 581],
  [1, 'open', 'doc', 'BIM4LCA-ARK', 177],
  [2, 'open', 'site', 'Default', 92],
  [3, 'open', 'building', 'Building.b.1', 149],
  [4, 'open', 'level', 'Level_04', 110],
  [5, 'closed', 'folder', 'Door', 63],
  [5, 'closed', 'folder', 'Opening', 107],
  [5, 'closed', 'folder', 'Slab', 52],
  [5, 'open', 'folder-open', 'Space', 73],
  [6, '', 'cube', 'Space.1.1 : 3H+K+WC+KPH', 346],
  [6, '', 'cube', 'Space.1.2 : BATHROOM[BATH', 358],
  [6, '', 'cube', 'Space.1.3 : ROOM[ROOM:17', 345],
  [6, '', 'cube', 'Space.1.4 : ROOM[ROOM:17', 345],
  [6, '', 'cube', 'Space.1.5 : KITCHEN[KITC', 323],
  [6, '', 'cube', 'Space.1.6 : ROOM[ROOM:17', 345],
  [6, '', 'cube', 'Space.1.7 : VESTIBULE[VES', 323],
  [5, 'open', 'folder-open', 'Spatial Zone', 155],
  [6, 'selected', 'zone', 'Spatial Zone.1.1', 202],
  [5, 'closed', 'folder', 'Wall', 52],
  [5, 'closed', 'folder', 'Window', 100],
  [1, 'closed', 'folder', 'Door', 63],
  [1, 'closed', 'folder', 'Space', 73],
  [1, 'closed', 'folder', 'Wall', 52],
];
const openArrow = '<svg class="h-[13px] w-[12px] shrink-0" viewBox="0 0 12 13"><path d="M0 0H12L6 13Z"/></svg>';
const closedArrow = '<svg class="h-[13px] w-[12px] shrink-0" viewBox="0 0 12 13"><path d="M0 0V13L12 6.500Z"/></svg>';
const noArrow = '<i class="w-[12px] shrink-0"></i>';
document.getElementById('tree').innerHTML = tree.map(([level, state, icon, label, w], i) => {
  const tone = state === 'selected' ? 'bg-[#0a4bdc] text-white' : i % 2 ? 'bg-[#dfdfdf] text-black' : 'bg-white text-black';
  const arrow = state === 'open' ? openArrow : state === 'closed' ? closedArrow : noArrow;
  return `<div class="h-[44px] shrink-0 ${tone}"><div class="flex h-[43px] w-[642px] items-center overflow-hidden" style="padding-left:${10 + level * 40}px">${arrow}<svg class="ml-[20px] size-[28px] shrink-0 text-[#222]"><use href="#${icon}"/></svg><span class="ml-[10px] whitespace-nowrap leading-[43px]" data-w="${w}">${label}</span></div></div>`;
}).join('') + [
  'bg-[#dfdfdf]', 'bg-white', 'bg-[#e2e2e2]', 'bg-white', 'bg-[#e6e6e6]', 'bg-white', 'bg-[#eaeaea]', 'bg-white', 'bg-[#eeeeee]',
  'bg-white', 'bg-[#f3f3f3]', 'bg-white', 'bg-[#f7f7f7]', 'bg-white', 'bg-[#fbfbfb]',
].map(c => `<div class="h-[44px] shrink-0 ${c}"></div>`).join('');

// Property rows: group [title, width] or property [label, width, value, width]
const props = [
  ['Model Attributes', 228],
  ['Model', 75, '2973806b-3367-43d5-87b6-9d8...', 448],
  ['Solibri Data', 154],
  ['Discipline', 127, 'Architectural', 146],
  ['Space Group Type', 225, '', 0],
  ['Model Categories', 218, '', 0],
  ['Information CAD', 226],
  ['Layer', 67, '', 0],
  ['Geometry', 120, 'Extrusion', 107],
  ['Application', 145, 'Autodesk Revit 2024 (ENU)', 316],
  ['Component Attributes', 302],
  ['Name', 73, '3H+K+WC+KPH', 194],
  ['Number', 102, 'HSTO.AS5', 115],
  ['Type', 61, '3H+K+WC+KPH HSTO.AS5', 318],
  ['Type Name', 140, '3H+K+WC+KPH HSTO.AS5:1854085', 438],
  ['Object Type', 151, '', 0],
  ['Element Type', 170, '', 0],
  ['Composition Type', 232, 'ELEMENT', 109],
  ['Description', 148, '', 0],
  ['Occupant', 121, '', 0],
  ['GUID', 65, '1mPgxuRCP0iffSTZ7T30Fn', 316],
  ['BATID', 76, '', 0],
  ['Ifc Information', 197],
  ['Predefined Type', 201, 'SPACE', 73],
  ['Interior', 93, 'True', 53],
  ['IFC Entity', 120, 'IfcSpace', 93],
  ['IFC Type', 108, 'IfcSpaceType', 151],
  ['IFC Schema', 145, 'IFC4', 49],
  ['Hierarchy', 132],
];
document.getElementById('props').innerHTML = props.map(([label, w, value, vw], i) => {
  const tone = i % 2 ? 'bg-[#dfdfdf]' : 'bg-white';
  const left = value === undefined
    ? `<span class="ml-[10px] flex w-[12px]">${i < 28 ? openArrow : ''}</span><b class="ml-[17px] whitespace-nowrap leading-[44px]" data-w="${w}">${label}</b>`
    : `<svg class="ml-[88px] h-[20px] w-[12px] shrink-0"><use href="#grip"/></svg><span class="ml-[19px] whitespace-nowrap leading-[44px]" data-w="${w}">${label}</span>`;
  const right = value ? `<span class="whitespace-nowrap leading-[44px]" data-size="24" data-w="${vw}">${value}</span>` : '';
  return `<div class="flex h-[44px] shrink-0 ${tone}"><div class="flex w-[464px] shrink-0 items-center border-r-2 border-[#bdbdbd]">${left}</div><div class="flex grow items-center pt-px pl-[2px] text-[24px]">${right}</div></div>`;
}).join('');

const pen = document.createElement('canvas').getContext('2d');
document.querySelectorAll('[data-w]').forEach(el => {
  const text = el.firstChild.data;
  const weight = el.tagName === 'B' && !el.classList.contains('font-normal') ? 'bold' : 'normal';
  pen.font = `${weight} ${el.dataset.size || 26}px "Noto Sans"`;
  el.style.letterSpacing = (el.dataset.w - pen.measureText(text).width) / text.length + 'px';
});
</script>
</body>
</html>
